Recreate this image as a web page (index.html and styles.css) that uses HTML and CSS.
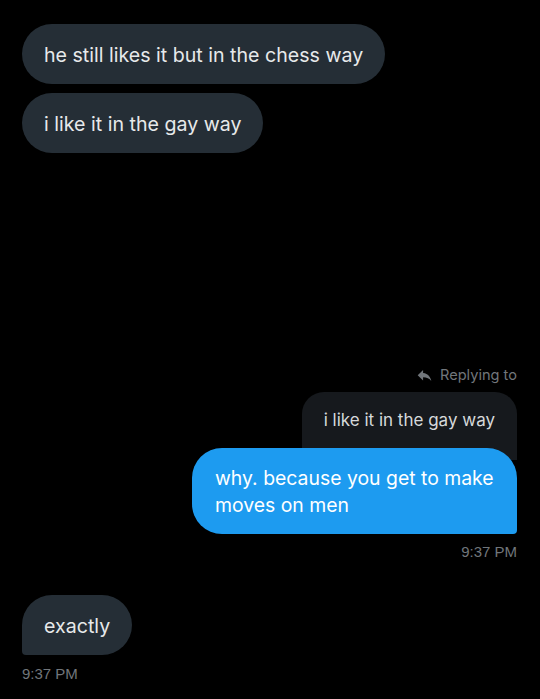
FILE: index.html
```html
<!DOCTYPE html>
<html lang="en">
<head>
  <meta charset="UTF-8">
  <meta name="viewport" content="width=device-width, initial-scale=1.0">
  <title>Messages</title>
  <link rel="stylesheet" href="styles.css">
</head>
<body>
  <div class="chat">
    <!-- first received group -->
    <div class="group group-in">
      <div class="bubble bubble-in">he still likes it but in the chess way</div>
      <div class="bubble bubble-in">i like it in the gay way</div>
    </div>

    <!-- sent reply -->
    <div class="group group-out">
      <div class="reply-meta">
        <svg class="reply-icon" viewBox="0 0 24 24" width="17" height="17">
          <path d="M10 8.6V4.2L2.4 11.6l7.6 7.4v-4.5c5.2 0 8.9 1.7 11.6 5.4-1.1-5.3-4.3-10.5-11.6-11.3z" fill="currentColor"/>
        </svg>
        <span>Replying to</span>
      </div>
      <div class="quote">i like it in the gay way</div>
      <div class="bubble bubble-out">why. because you get to make moves on men</div>
      <div class="time">9:37 PM</div>
    </div>

    <!-- last received -->
    <div class="group group-in group-last">
      <div class="bubble bubble-in bubble-tail">exactly</div>
      <div class="time">9:37 PM</div>
    </div>
  </div>
</body>
</html>
```

FILE: styles.css
```css
body {
  margin: 0;
  background: #000;
  font-family: Inter, "Noto Sans", sans-serif;
  color: #e7e9ea;
}
.chat {
  padding: 24px 23px 0 22px;
}
.group {
  display: flex;
  flex-direction: column;
  gap: 9px;
}
.group-in {
  align-items: flex-start;
}
.group-out {
  align-items: flex-end;
  gap: 0;
  margin-top: 212px;
}
.group-last {
  margin-top: 33px;
}
.bubble {
  font-size: 19.6px;
  line-height: 27px;
  padding: 18px 22px 15px;
  border-radius: 30px;
}
.bubble-in {
  background: #252e36;
}
.bubble-tail {
  border-bottom-left-radius: 4px;
}
.bubble-out {
  background: #1d9bf0;
  color: #fff;
  font-size: 19.4px;
  border-bottom-right-radius: 4px;
  padding: 17px 22px 15px 23px;
  max-width: 280px;
  position: relative;
  margin-top: -12px;
}
.reply-meta {
  display: flex;
  align-items: center;
  gap: 7px;
  font-size: 14.6px;
  line-height: 20px;
  color: #71767b;
  height: 20px;
  margin-bottom: 7px;
}
.reply-icon {
  color: #71767b;
}
.quote {
  background: #16191d;
  color: #d6d9db;
  font-size: 17px;
  line-height: 24px;
  padding: 16px 22px 28px;
  border-radius: 22px 22px 0 0;
}
.time {
  font-family: "Liberation Sans", Arial, sans-serif;
  font-size: 15px;
  line-height: 20px;
  color: #71767b;
  margin-top: 8px;
}
.group-last .time {
  margin-top: 0;
}
```
